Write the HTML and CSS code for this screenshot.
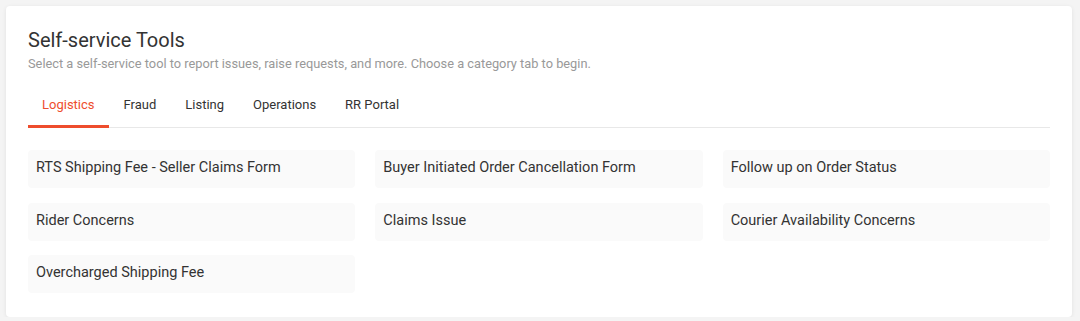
FILE: index.html
```html
<!DOCTYPE html>
<html lang="en">
<head>
    <meta charset="UTF-8">
    <meta name="viewport" content="width=device-width, initial-scale=1.0">
    <title>Self-service Tools</title>
    <link rel="stylesheet" href="styles.css">
</head>
<body>
    <div class="card">
        <h1>Self-service Tools</h1>
        <p class="subtitle">Select a self-service tool to report issues, raise requests, and more. Choose a category tab to begin.</p>
        <div class="tabs">
            <div class="tab active">Logistics</div>
            <div class="tab">Fraud</div>
            <div class="tab">Listing</div>
            <div class="tab">Operations</div>
            <div class="tab">RR Portal</div>
        </div>
        <div class="tools">
            <div class="tool">RTS Shipping Fee - Seller Claims Form</div>
            <div class="tool">Buyer Initiated Order Cancellation Form</div>
            <div class="tool">Follow up on Order Status</div>
            <div class="tool">Rider Concerns</div>
            <div class="tool">Claims Issue</div>
            <div class="tool">Courier Availability Concerns</div>
            <div class="tool">Overcharged Shipping Fee</div>
        </div>
    </div>
</body>
</html>
```

FILE: styles.css
```css
body {
    font-family: Roboto, "Liberation Sans", sans-serif;
    margin: 0;
    padding: 6px 8px 0 6px;
    background-color: #f4f4f4;
    color: #333;
}
.card {
    background-color: #fff;
    border-radius: 4px;
    box-shadow: 0 1px 4px rgba(0,0,0,0.08);
    padding: 22px 22px 24px;
}
h1 {
    margin: 0;
    font-size: 20px;
    font-weight: 400;
    line-height: 24px;
    color: #333;
}
.subtitle {
    margin: 4px 0 0;
    font-size: 12.8px;
    line-height: 16px;
    color: #999;
}
.tabs {
    display: flex;
    margin-top: 12px;
    border-bottom: 1px solid #e8e8e8;
}
.tab {
    font-size: 13px;
    line-height: 18px;
    padding: 12px 14.5px 11px;
    margin-bottom: -1px;
    border-bottom: 3px solid transparent;
    cursor: pointer;
}
.tab:first-child {
    padding-left: 14px;
}
.tab.active {
    color: #ee4d2d;
    border-bottom-color: #ee4d2d;
}
.tools {
    display: grid;
    grid-template-columns: repeat(3, 1fr);
    column-gap: 20px;
    row-gap: 14.5px;
    margin-top: 22px;
}
.tool {
    background-color: #fafafa;
    border-radius: 4px;
    font-size: 14.5px;
    line-height: 35px;
    padding: 0 8px 3px;
    cursor: pointer;
}
```
